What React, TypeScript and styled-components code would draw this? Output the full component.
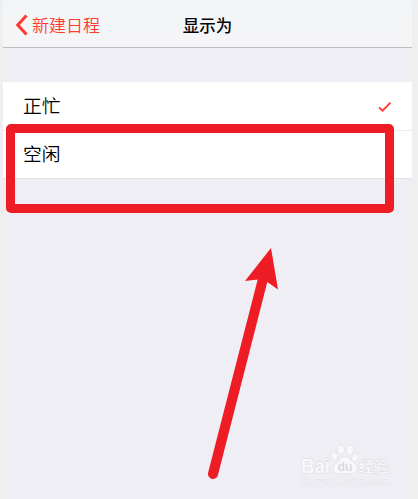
import React from "react";
import styled, { createGlobalStyle } from "styled-components";

const GlobalStyle = createGlobalStyle`
  * { box-sizing: border-box; }
  body { margin: 0; background: #efefef; overflow: hidden; }
`;

const Page = styled.main`
  position: relative;
  width: 418px;
  height: 499px;
  padding: 0 6px 0 3px;
  background: #efefef;
  font-family: "Noto Sans CJK SC", sans-serif;
  overflow: hidden;
`;

const Screen = styled.div`
  height: 100%;
  background: #efeef4;
`;

const NavBar = styled.header`
  display: grid;
  grid-template-columns: 1fr auto 1fr;
  align-items: center;
  height: 48px;
  padding: 3px 12px 0;
  background: linear-gradient(#f2f5f7, #f5f5f7);
  border-bottom: 1px solid #bebdc2;
`;

const BackButton = styled.button`
  display: flex;
  align-items: center;
  gap: 4px;
  padding: 0;
  border: 0;
  background: none;
  color: #ff3b30;
  font: 350 17px/24px "Noto Sans CJK SC", sans-serif;
`;

const Title = styled.h1`
  margin: 0;
  color: #050507;
  font-size: 16.5px;
  font-weight: 500;
  line-height: 24px;
`;

const Options = styled.ul`
  margin: 34px 0 0;
  padding: 0;
  list-style: none;
  background: #fff;
  border-bottom: 1px solid #e2e2e5;
`;

const Option = styled.li`
  display: flex;
  align-items: center;
  justify-content: space-between;
  height: 48px;
  padding: 0 20px 2px;
  color: #000;
  font-size: 18.7px;
  font-weight: 350;
  line-height: 28px;

  & + & {
    box-shadow: inset 0 1px 0 #ececef;
  }
`;

const CheckMark = styled.svg`
  margin-top: 2px;
`;

const Highlight = styled.div`
  position: absolute;
  left: 6px;
  top: 124px;
  width: 388px;
  height: 89px;
  border: 9px solid #ee1c25;
  border-radius: 5px;
`;

const Arrow = styled.svg`
  position: absolute;
  left: 200px;
  top: 240px;
`;

const Watermark = styled.svg`
  position: absolute;
  left: 296px;
  top: 440px;
`;

export default function App() {
  return (
    <>
      <GlobalStyle />
      <Page>
        <Screen>
          <NavBar>
            <BackButton>
              <svg width="13" height="22" viewBox="0 0 13 22" fill="none" stroke="currentColor" strokeWidth="3.1">
                <path d="M11.5 1.5 2.8 11l8.7 9.5" />
              </svg>
              新建日程
            </BackButton>
            <Title>显示为</Title>
          </NavBar>
          <Options>
            <Option>
              正忙
              <CheckMark width="14" height="13" viewBox="0 0 14 13" fill="none" stroke="#ff3b30" strokeWidth="1.9">
                <path d="m1 7.4 3.6 3.3 7.9-8" />
              </CheckMark>
            </Option>
            <Option>空闲</Option>
          </Options>
        </Screen>
        <Highlight />
        <Arrow width="90" height="245" viewBox="200 240 90 245" fill="#ee1c25">
          <path d="M271 248 245 281l12.7-1.4L208.1 472.8a5 5 0 0 0 9.8 2.4L267.3 282l10.7 7.5Z" />
        </Arrow>
        <Watermark width="100" height="52" viewBox="296 440 100 52">
          <g fill="#f8f8fb" stroke="#dfdfe4" strokeWidth="1.3" paintOrder="stroke" strokeLinejoin="round">
            <ellipse cx="334.5" cy="456" rx="2.9" ry="4" transform="rotate(-14 334.5 456)" />
            <ellipse cx="341" cy="449.8" rx="3" ry="4.3" />
            <ellipse cx="350" cy="450" rx="3" ry="4.3" transform="rotate(10 350 450)" />
            <ellipse cx="355" cy="458" rx="2.8" ry="4" transform="rotate(14 355 458)" />
            <path d="M345 456.5c-4 0-5 4-8 6.5-5.500 4-4 10.500 1.500 10.500h13.500c5.500 0 6.500-6.500 2-10.500-3.500-3-5-6.500-9-6.500Z" />
            <text x="301" y="472.5" fontFamily="Liberation Sans" fontWeight="700" fontSize="21" textLength="29" lengthAdjust="spacingAndGlyphs">Bai</text>
            <text x="358.5" y="471.5" fontFamily="Noto Sans CJK SC" fontWeight="500" fontSize="15" textLength="30" lengthAdjust="spacingAndGlyphs">经验</text>
            <text x="301.5" y="484.5" fontFamily="Liberation Sans" fontSize="9.5" strokeWidth=".9" stroke="#e3e3e8" fill="#f4f4f8" textLength="88" lengthAdjust="spacingAndGlyphs">jingyan.baidu.com</text>
          </g>
          <text x="337.5" y="471" fill="#dadadf" fontFamily="Liberation Sans" fontWeight="700" fontSize="13" textLength="15" lengthAdjust="spacingAndGlyphs">du</text>
        </Watermark>
      </Page>
    </>
  );
}
